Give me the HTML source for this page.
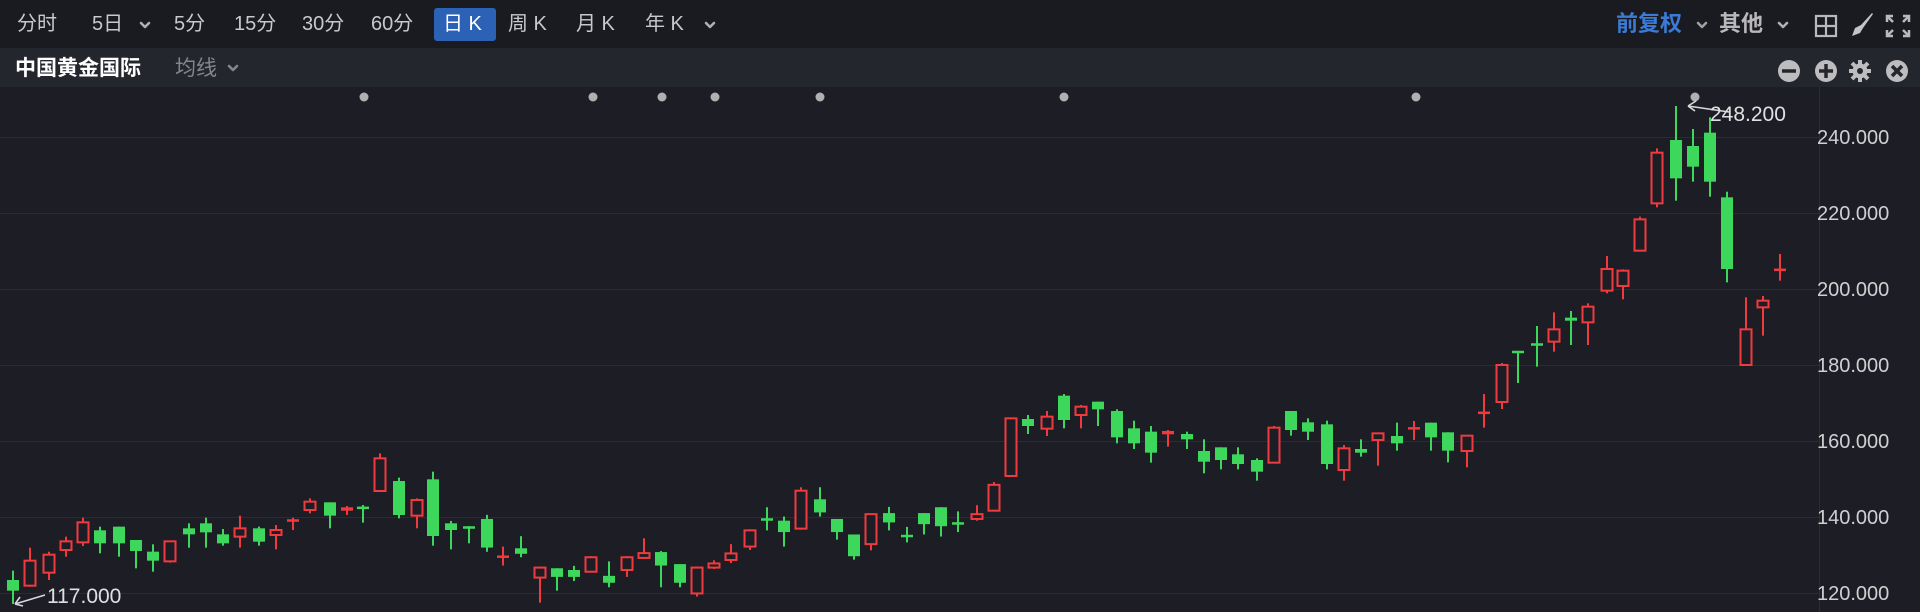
<!DOCTYPE html>
<html><head><meta charset="utf-8"><style>
html,body{margin:0;padding:0;background:#1d1e25;width:1920px;height:612px;overflow:hidden}
body{position:relative;font-family:"Liberation Sans","Noto Sans CJK SC",sans-serif}
.t{position:absolute;white-space:nowrap;font-size:20px;color:#c9c9cc;line-height:24px}
#bar{position:absolute;left:0;top:0;width:1920px;height:48px;background:#1a1b21}
#row2{position:absolute;left:0;top:48px;width:1920px;height:39px;background:#24262d}
</style></head><body>
<div id="bar"></div><div id="row2"></div>
<div style="position:absolute;left:434px;top:8px;width:62px;height:33px;background:#2c62b6;border-radius:3px"></div>
<div class="t" style="left:17px;top:12px">分时</div>
<div class="t" style="left:92px;top:12px">5日</div>
<div class="t" style="left:174px;top:12px">5分</div>
<div class="t" style="left:234px;top:12px">15分</div>
<div class="t" style="left:302px;top:12px">30分</div>
<div class="t" style="left:371px;top:12px">60分</div>
<div class="t" style="left:443px;top:12px;color:#fff">日 K</div>
<div class="t" style="left:508px;top:12px">周 K</div>
<div class="t" style="left:576px;top:12px">月 K</div>
<div class="t" style="left:645px;top:12px">年 K</div>
<div class="t" style="left:1616px;top:12px;color:#3b7bd6;font-weight:bold;font-size:22px">前复权</div>
<div class="t" style="left:1719px;top:12px;color:#b8b8bb;font-weight:bold;font-size:22px">其他</div>
<div class="t" style="left:15px;top:57px;color:#fff;font-weight:bold;font-size:21px">中国黄金国际</div>
<div class="t" style="left:175px;top:57px;color:#85868b;font-size:21px">均线</div>
<svg id="c" width="1920" height="612" style="position:absolute;left:0;top:0" xmlns="http://www.w3.org/2000/svg">
<g fill="none" stroke="#b0b0b3" stroke-width="2.6" stroke-linecap="round" stroke-linejoin="round">
<path d="M141 23 L145 27 L149 23"/><path d="M706 23 L710 27 L714 23"/>
<path d="M1698 23 L1702 27 L1706 23" stroke="#a0a0a3"/><path d="M1779 23 L1783 27 L1787 23"/>
<path d="M229 66 L233 70 L237 66" stroke="#85868b"/>
</g>
<g fill="none" stroke="#b9b9bc" stroke-width="2.2">
<rect x="1816" y="16" width="20" height="20"/><line x1="1826" y1="16" x2="1826" y2="36"/><line x1="1816" y1="26" x2="1836" y2="26"/>
</g>
<path d="M1852 36 L1855 28 L1861 25 L1872 13 L1873 14 L1863 28 L1860 33 Z" fill="#c4c4c7"/>
<g stroke="#b9b9bc" stroke-width="2.5" fill="none">
<path d="M1887 22 V16 H1893 M1888 17 L1893 22"/><path d="M1909 22 V16 H1903 M1908 17 L1903 22"/>
<path d="M1887 30 V36 H1893 M1888 35 L1893 30"/><path d="M1909 30 V36 H1903 M1908 35 L1903 30"/>
</g>
<g fill="#bdbdc0">
<circle cx="1789" cy="71" r="11"/><circle cx="1826" cy="71" r="11"/><circle cx="1897" cy="71" r="11"/>
<circle cx="1860" cy="71" r="7.5"/>
</g>
<g stroke="#24262d" stroke-width="3.5">
<line x1="1782" y1="71" x2="1796" y2="71"/><line x1="1819" y1="71" x2="1833" y2="71"/><line x1="1826" y1="64" x2="1826" y2="78"/>
<line x1="1892" y1="66" x2="1902" y2="76"/><line x1="1902" y1="66" x2="1892" y2="76"/>
</g>
<g stroke="#bdbdc0" stroke-width="4"><line x1="1860" y1="60" x2="1860" y2="82"/><line x1="1849" y1="71" x2="1871" y2="71"/><line x1="1852" y1="63" x2="1868" y2="79"/><line x1="1868" y1="63" x2="1852" y2="79"/></g>
<circle cx="1860" cy="71" r="3" fill="#24262d"/>
<g id="grid" stroke="#2a2c34" stroke-width="1"></g>
<line x1="1819.5" y1="87" x2="1819.5" y2="612" stroke="#2c2e36"/>
<g id="dots" fill="#b0b0b3"></g>
<g id="cand"></g>
<g fill="#d0d0d3" font-size="20" font-family="Liberation Sans, sans-serif" id="ax"></g>
<g stroke="#d8d8db" stroke-width="1.6" fill="none">
<path d="M1729 112 L1688 106 M1688 106 L1696 101 M1688 106 L1695 111"/>
<path d="M45 595 L15 604 M15 604 L20 597 M15 604 L23 606"/>
</g>
<text x="1710" y="121" fill="#e0e0e3" font-size="21" font-family="Liberation Sans, sans-serif">248.200</text>
<text x="47" y="603" fill="#e0e0e3" font-size="21" font-family="Liberation Sans, sans-serif">117.000</text>
</svg>
<script>
var NS="http://www.w3.org/2000/svg";
function el(p,n,a){var e=document.createElementNS(NS,n);for(var k in a)e.setAttribute(k,a[k]);document.getElementById(p).appendChild(e);return e;}
var labs=[240,220,200,180,160,140,120];
labs.forEach(function(p){var y=137+(240-p)*3.8;el('grid','line',{x1:0,x2:1819,y1:y+0.5,y2:y+0.5});var t=el('ax','text',{x:1817,y:y+7});t.textContent=p+".000";});
[364,593,662,715,820,1064,1416,1695].forEach(function(x){el('dots','circle',{cx:x,cy:97,r:4.5});});
var A=[[40,'G',480,512,452,552],[90,'R',422,497,383,500],[147,'R',404,458,395,480],[198,'R',364,390,350,410],[249,'R',307,367,293,378],[300,'G',331,370,320,400],[357,'G',320,370,320,410],[408,'G',360,393,360,445],[460,'G',395,422,373,455],[511,'R',364,424,364,428],[567,'G',325,343,310,383],[618,'G',310,337,293,383],[670,'G',343,370,327,377],[721,'R',325,350,287,383],[778,'G',325,365,320,377],[828,'R',330,345,315,388],[880,'R',300,303,293,330],[931,'R',245,270,235,280],[989,'G',247,287,247,325],[1040,'R',262,272,258,285],[1090,'G',262,265,255,308],[1141,'R',115,213,100,215],[1198,'G',183,285,173,295],[1250,'R',240,287,235,325],[1300,'G',178,348,155,377],[1352,'G',310,330,303,388],[1408,'G',320,325,318,370]];
var B=[[48,'G',287,370,275,382],[97,'R',393,400,367,422],[147,'G',372,388,337,398],[202,'R',428,457,425,530],[252,'G',430,455,430,495],[302,'G',435,455,423,467],[350,'R',398,440,395,442],[405,'G',452,472,410,485],[455,'R',398,435,395,455],[505,'R',386,400,343,402],[555,'G',383,422,380,485],[610,'G',418,472,418,485],[658,'R',428,503,425,512],[708,'R',416,428,407,432],[757,'R',387,406,360,415],[812,'R',320,367,317,377],[862,'G',287,290,253,320],[911,'G',292,325,280,367],[961,'R',205,315,195,318],[1016,'G',230,268,195,280],[1065,'G',287,325,287,347],[1115,'G',332,395,332,405],[1165,'R',273,360,273,378],[1218,'G',270,297,252,320],[1268,'G',333,340,310,355],[1318,'G',270,302,270,332],[1368,'G',253,308,253,338],[1416,'G',298,302,265,325],[1472,'R',273,287,247,292],[1521,'R',188,263,180,265]];
var C=[[62,'R',115,288,115,290],[113,'G',117,138,105,162],[170,'R',110,146,93,168],[222,'G',47,120,42,145],[273,'R',80,105,75,145],[323,'G',65,88,65,138],[380,'G',93,172,88,190],[432,'G',145,190,122,207],[483,'G',155,218,138,248],[534,'R',153,163,150,200],[590,'G',162,178,155,207],[642,'G',213,245,178,280],[693,'G',202,240,202,268],[744,'G',223,252,202,268],[800,'G',240,275,235,302],[853,'R',143,248,138,250],[903,'G',93,150,93,167],[955,'G',127,155,115,180],[1010,'G',133,252,122,268],[1062,'R',205,270,195,302],[1113,'G',207,218,178,230],[1165,'R',160,180,160,257],[1220,'G',168,190,128,212],[1273,'R',143,147,123,180],[1323,'G',128,172,128,212],[1375,'G',157,212,157,247],[1430,'R',167,213,167,262],[1482,'R',97,100,42,143]];
var D=[[412,'G',790,797,738,860],[463,'R',748,785,697,815],[515,'G',713,722,693,795],[566,'R',680,727,670,795],[623,'R',567,632,528,640],[673,'R',572,618,568,658],[724,'R',418,512,410,512],[776,'R',218,370,205,382],[833,'G',180,295,78,362],[884,'G',198,260,147,305],[935,'G',158,305,112,350],[987,'G',352,567,335,607],[1043,'R',748,855,652,857],[1095,'R',662,682,648,767],[1145,'R',567,572,522,602]];
var all=[];
A.forEach(function(c){all.push([c[0]/3,c[1],420+c[2]/3,420+c[3]/3,420+c[4]/3,420+c[5]/3]);});
B.forEach(function(c){all.push([470+c[0]/2.904,c[1],420+c[2]/2.9,420+c[3]/2.9,420+c[4]/2.9,420+c[5]/2.9]);});
C.forEach(function(c){all.push([990+c[0]/3,c[1],380+c[2]/3,380+c[3]/3,380+c[4]/3,380+c[5]/3]);});
all.push([1502,'R',365,402,363,409]);all.push([1518,'G',351,353,351,383]);
D.forEach(function(c){all.push([1400+c[0]/3.015,c[1],80+c[2]/3,80+c[3]/3,80+c[4]/3,80+c[5]/3]);});
all.forEach(function(c){
 var x=Math.round(c[0]),col=c[1]=='R'?'#f03a3e':'#3dd75b';
 var bt=c[2],bb=c[3];if(bb-bt<2.5){var m=(bt+bb)/2;bt=m-1.25;bb=m+1.25;}
 el('cand','line',{x1:x,x2:x,y1:c[4],y2:c[5],stroke:col,'stroke-width':2});
 if(c[1]=='R'&&bb-bt>4){el('cand','rect',{x:x-5.5,y:bt,width:11,height:bb-bt,fill:'#1d1e25',stroke:col,'stroke-width':2});}
 else el('cand','rect',{x:x-6,y:bt,width:12,height:bb-bt,fill:col});
});
</script>
</body></html>
